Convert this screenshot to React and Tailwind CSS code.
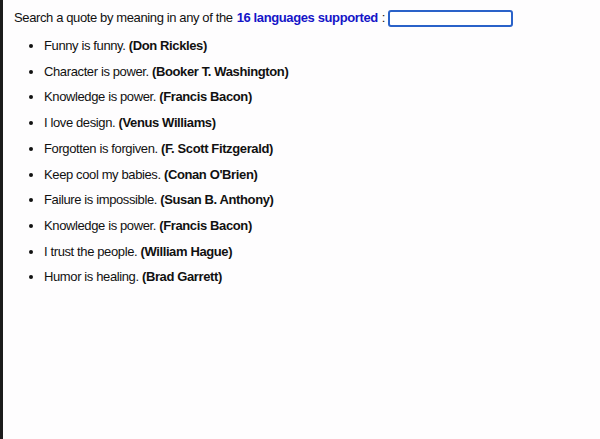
const quotes = [
  ['Funny is funny.', 'Don Rickles'],
  ['Character is power.', 'Booker T. Washington'],
  ['Knowledge is power.', 'Francis Bacon'],
  ['I love design.', 'Venus Williams'],
  ['Forgotten is forgiven.', 'F. Scott Fitzgerald'],
  ['Keep cool my babies.', "Conan O'Brien"],
  ['Failure is impossible.', 'Susan B. Anthony'],
  ['Knowledge is power.', 'Francis Bacon'],
  ['I trust the people.', 'William Hague'],
  ['Humor is healing.', 'Brad Garrett'],
];

export default function App() {
  return (
    <div className="min-h-[439px] bg-[#fefdfe] border-l-[3px] border-[#1c1c1c] text-[13px] tracking-[-0.38px] text-[#111] font-['Liberation_Sans',Arial,sans-serif]">
      <div className="pl-[11px] pt-[9px] flex items-center h-[18px] box-content">
        <span>Search a quote by meaning in any of the </span>
        <span className="ml-1 font-bold text-[#1515c8]">16 languages supported</span>
        <span className="ml-1">:</span>
        <input
          className="ml-[3px] w-[125px] h-[17px] rounded-[3px] border-2 border-[#2a62c9] bg-white outline-none"
          type="text"
        />
      </div>
      <ul className="list-disc pl-[41px] pt-[6px]">
        {quotes.map(([q, a], i) => (
          <li key={i} className="leading-[25.7px]">
            {q} <b>({a})</b>
          </li>
        ))}
      </ul>
    </div>
  );
}
